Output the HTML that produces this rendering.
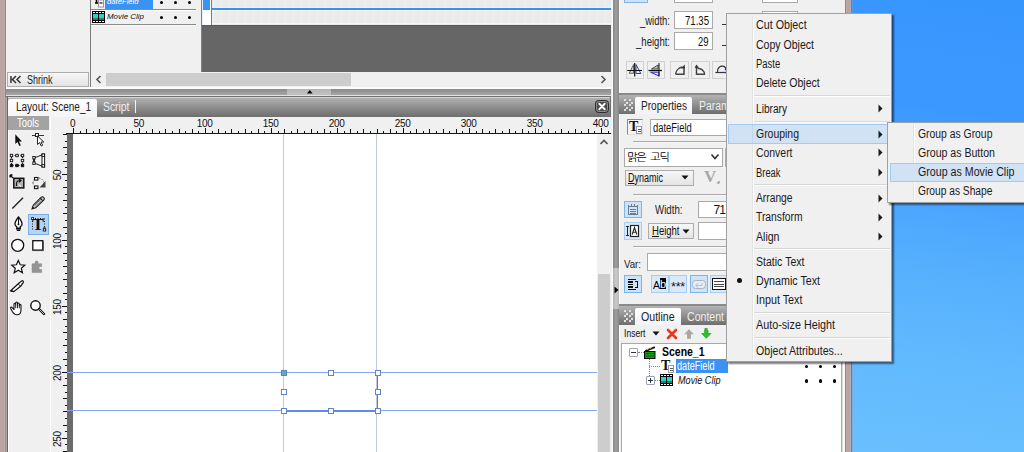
<!DOCTYPE html><html><head><meta charset="utf-8"><title>Layout</title><style>
html,body{margin:0;padding:0;}
body{width:1024px;height:452px;overflow:hidden;position:relative;background:#f0f0f0;
 font-family:"Liberation Sans","NanumGothic","Noto Sans CJK KR",sans-serif;font-size:12px;color:#1a1a1a;}
div{position:absolute;box-sizing:border-box;}
svg{position:absolute;overflow:visible;}
.t{white-space:nowrap;line-height:14px;height:14px;}
.inp{background:#fff;border:1px solid #a9a9a9;}
.btn{background:linear-gradient(#f6f6f6,#e4e4e4);border:1px solid #adadad;}
.ibtn{background:#f0f0f0;border:1px solid #d0d0d0;}
.hbtn{background:#cfe3f8;border:1px solid #7eb4ea;}
.hbtn2{background:#d9e9f9;border:1px solid #a8cdf0;}
.tabbar{background:linear-gradient(#b4b4b4,#8c8c8c 55%,#6e6e6e);}
.mi{left:757px;}
</style></head><body>
<div style="left:852px;top:0px;width:172px;height:452px;background:linear-gradient(188deg,#3795fe 0%,#3b99fe 25%,#4aa5fd 45%,#57b0fd 60%,#62bafe 80%,#6ac0fe 100%);"></div>
<div style="left:0px;top:0px;width:4px;height:452px;background:#baa5a4;"></div>
<div style="left:4px;top:0px;width:1px;height:452px;background:#bcacac;"></div>
<div style="left:5px;top:0px;width:1px;height:452px;background:#908484;"></div>
<div style="left:6px;top:0px;width:1px;height:452px;background:#f8f0f0;"></div>
<div style="left:845px;top:0px;width:1px;height:452px;background:#948686;"></div>
<div style="left:846px;top:0px;width:1px;height:452px;background:#bcaaaa;"></div>
<div style="left:847px;top:0px;width:3px;height:452px;background:#b8a4a2;"></div>
<div style="left:850px;top:0px;width:1px;height:452px;background:#b4aeb8;"></div>
<div style="left:851px;top:0px;width:1px;height:452px;background:#6c809c;"></div>
<div style="left:852px;top:0px;width:1px;height:452px;background:linear-gradient(#5a98e0,#7ab0e0);"></div>
<div style="left:90px;top:0px;width:1px;height:87px;background:#7a7a7a;"></div>
<div style="left:105px;top:0px;width:48px;height:9px;background:#3a92f3;overflow:hidden;"><div class="t" style="left:2px;top:-5.2px;color:#fff;font-size:8px;font-style:italic;transform:scaleX(0.960);transform-origin:0 0;">dateField</div></div>
<svg style="left:94px;top:0" width="12" height="9"><path d="M2.5 0v2.5M1 3h4" stroke="#000" stroke-width="1.6" fill="none"/><rect x="4.5" y="0" width="5" height="7" fill="#fff" stroke="#999" stroke-width="1"/><path d="M5.5 3h3" stroke="#333" stroke-width="1.4"/></svg>
<div style="left:91px;top:9px;width:105px;height:1px;background:#8a8a8a;"></div>
<div style="left:91px;top:10px;width:105px;height:1px;background:#fff;"></div>
<div style="left:91px;top:24px;width:105px;height:1px;background:#8a8a8a;"></div>
<div style="left:91px;top:25px;width:105px;height:1px;background:#fbfbfb;"></div>
<svg style="left:92px;top:11px" width="13" height="12" shape-rendering="crispEdges"><rect x="0" y="0" width="13" height="12" fill="#000"/><rect x="1" y="3" width="5" height="6" fill="#2fd0c8"/><rect x="7" y="3" width="5" height="6" fill="#2fd0c8"/><rect x="1" y="7" width="5" height="2" fill="#188a60"/><rect x="7" y="7" width="5" height="2" fill="#188a60"/><rect x="1" y="1" width="2" height="1" fill="#fff"/><rect x="4" y="1" width="2" height="1" fill="#fff"/><rect x="7" y="1" width="2" height="1" fill="#fff"/><rect x="10" y="1" width="2" height="1" fill="#fff"/><rect x="1" y="10" width="2" height="1" fill="#fff"/><rect x="4" y="10" width="2" height="1" fill="#fff"/><rect x="7" y="10" width="2" height="1" fill="#fff"/><rect x="10" y="10" width="2" height="1" fill="#fff"/></svg>
<div class="t" style="left:107px;top:10.1px;font-size:8px;transform:scaleX(0.9908);transform-origin:0 0;font-style:italic;color:#111;">Movie Clip</div>
<div style="left:159.8px;top:0.8px;width:3.4px;height:3.4px;border-radius:2px;background:#000;"></div>
<div style="left:159.8px;top:15.8px;width:3.4px;height:3.4px;border-radius:2px;background:#000;"></div>
<div style="left:173.8px;top:0.8px;width:3.4px;height:3.4px;border-radius:2px;background:#000;"></div>
<div style="left:173.8px;top:15.8px;width:3.4px;height:3.4px;border-radius:2px;background:#000;"></div>
<div style="left:187.8px;top:0.8px;width:3.4px;height:3.4px;border-radius:2px;background:#000;"></div>
<div style="left:187.8px;top:15.8px;width:3.4px;height:3.4px;border-radius:2px;background:#000;"></div>
<div style="left:201px;top:0px;width:1px;height:72px;background:#808080;"></div>
<div style="left:202px;top:0px;width:1px;height:25px;background:#e6f0fc;"></div>
<div style="left:203px;top:0px;width:7px;height:10px;background:#3a92f3;"></div>
<div style="left:203px;top:10px;width:8px;height:15px;background:#fff;"></div>
<div style="left:210px;top:0px;width:1px;height:25px;background:#fff;"></div>
<div style="left:211px;top:0px;width:1px;height:25px;background:#7c7c7c;"></div>
<div style="left:212px;top:0px;width:399px;height:25px;background:repeating-linear-gradient(90deg,#ebebeb 0,#ebebeb 1px,#f0f0f0 1px,#f0f0f0 2px,#ebebeb 2px,#ebebeb 8px);"></div>
<div style="left:212px;top:7px;width:399px;height:1px;background:#f5efe6;"></div>
<div style="left:212px;top:10px;width:399px;height:1px;background:#faf3e4;"></div>
<div style="left:212px;top:8px;width:399px;height:2px;background:#3290f6;"></div>
<div style="left:202px;top:25px;width:409px;height:47px;background:#666666;"></div>
<div style="left:202px;top:25px;width:409px;height:1px;background:#585858;"></div>
<div style="left:212px;top:23px;width:399px;height:1px;background:#f6f6f6;"></div>
<div style="left:202px;top:72px;width:409px;height:15px;background:#f0f0f0;"></div>
<div style="left:92px;top:72px;width:519px;height:15px;background:#f0f0f0;"></div>
<div style="left:106px;top:73px;width:245px;height:13px;background:#cdcdcd;"></div>
<svg style="left:95px;top:75px" width="8" height="9"><path d="M5.5 1L2 4.5L5.5 8" stroke="#555" stroke-width="1.6" fill="none"/></svg>
<svg style="left:599px;top:75px" width="8" height="9"><path d="M2.5 1L6 4.5L2.5 8" stroke="#555" stroke-width="1.6" fill="none"/></svg>
<div class="btn" style="left:7px;top:72px;width:82px;height:15px;"></div>
<svg style="left:10px;top:75px" width="12" height="9"><path d="M1 1v7M6 1L2.5 4.5L6 8M10.5 1L7 4.5L10.5 8" stroke="#333" stroke-width="1.5" fill="none"/></svg>
<div class="t" style="left:26.5px;top:73px;font-size:12px;transform:scaleX(0.7497);transform-origin:0 0;color:#222;">Shrink</div>
<div style="left:6px;top:87px;width:608px;height:2px;background:#fbfbfb;"></div>
<div style="left:6px;top:89px;width:605px;height:6px;background:linear-gradient(#8a8a8a,#a6a6a6);"></div>
<div style="left:287px;top:89px;width:44px;height:6px;background:linear-gradient(#b4b4b4,#c2c2c2);"></div>
<svg style="left:306.700px;top:90.300px" width="6" height="4"><path d="M2.800 0L5.600 3.400H0Z" fill="#000"/></svg>
<div style="left:6px;top:95px;width:605px;height:1px;background:#e2e2e2;"></div>
<div class="tabbar" style="left:6px;top:96px;width:605px;height:21px;border:1px solid #6f6f6f;border-bottom:none;"></div>
<div style="left:7px;top:97px;width:603px;height:1px;background:#d6d6d6;"></div>
<div style="left:8px;top:99px;width:89px;height:18px;background:linear-gradient(#ffffff,#f4f4f4);border-radius:2px 2px 0 0;"></div>
<div class="t" style="left:15.6px;top:100px;font-size:12px;transform:scaleX(0.8327);transform-origin:0 0;color:#222;">Layout: Scene_1</div>
<div class="t" style="left:103px;top:100px;font-size:12px;transform:scaleX(0.8639);transform-origin:0 0;color:#f0f0f0;">Script</div>
<div style="left:135px;top:100px;width:1px;height:13px;background:#f2f2f2;"></div>
<svg style="left:595px;top:100px" width="14" height="13"><rect x="0.5" y="0.5" width="13" height="12" rx="3" fill="#4a4a4a" stroke="#2c2c2c"/><rect x="1.5" y="1.5" width="11" height="10" rx="2.2" fill="none" stroke="#909090"/><path d="M4.3 3.8l5.4 5.4M9.700 3.800l-5.400 5.400" stroke="#fff" stroke-width="2" stroke-linecap="round"/></svg>
<div style="left:6px;top:117px;width:606px;height:335px;background:#f0f0f0;"></div>
<div style="left:5px;top:97px;width:1px;height:355px;background:#9c9090;"></div>
<div style="left:6px;top:97px;width:1px;height:355px;background:#aea6a6;"></div>
<div style="left:7px;top:97px;width:1px;height:355px;background:#6a6666;"></div>
<div style="left:8px;top:130px;width:1px;height:322px;background:#ffffff;"></div>
<div style="left:8px;top:116px;width:41px;height:14px;background:#a3a3a3;"></div>
<div class="t" style="left:17px;top:116px;font-size:12px;transform:scaleX(0.7854);transform-origin:0 0;color:#fff;">Tools</div>
<div style="left:50px;top:117px;width:1px;height:335px;background:#fdfdfd;"></div>
<div style="left:67px;top:134px;width:6px;height:318px;background:#6b6b6b;"></div>
<div style="left:73px;top:134px;width:524px;height:318px;background:#fff;"></div>
<div style="left:66px;top:133px;width:545px;height:1px;background:#1a1a1a;"></div>
<div style="left:597px;top:134px;width:14px;height:318px;background:#f0f0f0;"></div>
<div style="left:598px;top:274px;width:12px;height:178px;background:#cdcdcd;"></div>
<svg style="left:599px;top:138px" width="10" height="8"><path d="M1.5 6L5 2.5L8.5 6" stroke="#555" stroke-width="1.7" fill="none"/></svg>
<svg style="left:0;top:0" width="612" height="452" shape-rendering="crispEdges"><rect x="73" y="128" width="1" height="5" fill="#111"/><rect x="80" y="131" width="1" height="2" fill="#111"/><rect x="86" y="129" width="1" height="4" fill="#111"/><rect x="93" y="131" width="1" height="2" fill="#111"/><rect x="99" y="129" width="1" height="4" fill="#111"/><rect x="106" y="131" width="1" height="2" fill="#111"/><rect x="113" y="129" width="1" height="4" fill="#111"/><rect x="119" y="131" width="1" height="2" fill="#111"/><rect x="126" y="129" width="1" height="4" fill="#111"/><rect x="132" y="131" width="1" height="2" fill="#111"/><rect x="139" y="128" width="1" height="5" fill="#111"/><rect x="146" y="131" width="1" height="2" fill="#111"/><rect x="152" y="129" width="1" height="4" fill="#111"/><rect x="159" y="131" width="1" height="2" fill="#111"/><rect x="165" y="129" width="1" height="4" fill="#111"/><rect x="172" y="131" width="1" height="2" fill="#111"/><rect x="179" y="129" width="1" height="4" fill="#111"/><rect x="185" y="131" width="1" height="2" fill="#111"/><rect x="192" y="129" width="1" height="4" fill="#111"/><rect x="198" y="131" width="1" height="2" fill="#111"/><rect x="205" y="128" width="1" height="5" fill="#111"/><rect x="212" y="131" width="1" height="2" fill="#111"/><rect x="218" y="129" width="1" height="4" fill="#111"/><rect x="225" y="131" width="1" height="2" fill="#111"/><rect x="231" y="129" width="1" height="4" fill="#111"/><rect x="238" y="131" width="1" height="2" fill="#111"/><rect x="245" y="129" width="1" height="4" fill="#111"/><rect x="251" y="131" width="1" height="2" fill="#111"/><rect x="258" y="129" width="1" height="4" fill="#111"/><rect x="264" y="131" width="1" height="2" fill="#111"/><rect x="271" y="128" width="1" height="5" fill="#111"/><rect x="278" y="131" width="1" height="2" fill="#111"/><rect x="284" y="129" width="1" height="4" fill="#111"/><rect x="291" y="131" width="1" height="2" fill="#111"/><rect x="297" y="129" width="1" height="4" fill="#111"/><rect x="304" y="131" width="1" height="2" fill="#111"/><rect x="311" y="129" width="1" height="4" fill="#111"/><rect x="317" y="131" width="1" height="2" fill="#111"/><rect x="324" y="129" width="1" height="4" fill="#111"/><rect x="330" y="131" width="1" height="2" fill="#111"/><rect x="337" y="128" width="1" height="5" fill="#111"/><rect x="344" y="131" width="1" height="2" fill="#111"/><rect x="350" y="129" width="1" height="4" fill="#111"/><rect x="357" y="131" width="1" height="2" fill="#111"/><rect x="363" y="129" width="1" height="4" fill="#111"/><rect x="370" y="131" width="1" height="2" fill="#111"/><rect x="377" y="129" width="1" height="4" fill="#111"/><rect x="383" y="131" width="1" height="2" fill="#111"/><rect x="390" y="129" width="1" height="4" fill="#111"/><rect x="396" y="131" width="1" height="2" fill="#111"/><rect x="403" y="128" width="1" height="5" fill="#111"/><rect x="410" y="131" width="1" height="2" fill="#111"/><rect x="416" y="129" width="1" height="4" fill="#111"/><rect x="423" y="131" width="1" height="2" fill="#111"/><rect x="429" y="129" width="1" height="4" fill="#111"/><rect x="436" y="131" width="1" height="2" fill="#111"/><rect x="443" y="129" width="1" height="4" fill="#111"/><rect x="449" y="131" width="1" height="2" fill="#111"/><rect x="456" y="129" width="1" height="4" fill="#111"/><rect x="462" y="131" width="1" height="2" fill="#111"/><rect x="469" y="128" width="1" height="5" fill="#111"/><rect x="476" y="131" width="1" height="2" fill="#111"/><rect x="482" y="129" width="1" height="4" fill="#111"/><rect x="489" y="131" width="1" height="2" fill="#111"/><rect x="495" y="129" width="1" height="4" fill="#111"/><rect x="502" y="131" width="1" height="2" fill="#111"/><rect x="509" y="129" width="1" height="4" fill="#111"/><rect x="515" y="131" width="1" height="2" fill="#111"/><rect x="522" y="129" width="1" height="4" fill="#111"/><rect x="528" y="131" width="1" height="2" fill="#111"/><rect x="535" y="128" width="1" height="5" fill="#111"/><rect x="542" y="131" width="1" height="2" fill="#111"/><rect x="548" y="129" width="1" height="4" fill="#111"/><rect x="555" y="131" width="1" height="2" fill="#111"/><rect x="561" y="129" width="1" height="4" fill="#111"/><rect x="568" y="131" width="1" height="2" fill="#111"/><rect x="575" y="129" width="1" height="4" fill="#111"/><rect x="581" y="131" width="1" height="2" fill="#111"/><rect x="588" y="129" width="1" height="4" fill="#111"/><rect x="594" y="131" width="1" height="2" fill="#111"/><rect x="601" y="128" width="1" height="5" fill="#111"/><rect x="608" y="131" width="1" height="2" fill="#111"/><rect x="63" y="134" width="4" height="1" fill="#111"/><rect x="65" y="141" width="2" height="1" fill="#111"/><rect x="63" y="147" width="4" height="1" fill="#111"/><rect x="65" y="154" width="2" height="1" fill="#111"/><rect x="63" y="161" width="4" height="1" fill="#111"/><rect x="65" y="167" width="2" height="1" fill="#111"/><rect x="62" y="174" width="5" height="1" fill="#111"/><rect x="65" y="180" width="2" height="1" fill="#111"/><rect x="63" y="187" width="4" height="1" fill="#111"/><rect x="65" y="194" width="2" height="1" fill="#111"/><rect x="63" y="200" width="4" height="1" fill="#111"/><rect x="65" y="207" width="2" height="1" fill="#111"/><rect x="63" y="213" width="4" height="1" fill="#111"/><rect x="65" y="220" width="2" height="1" fill="#111"/><rect x="63" y="227" width="4" height="1" fill="#111"/><rect x="65" y="233" width="2" height="1" fill="#111"/><rect x="62" y="240" width="5" height="1" fill="#111"/><rect x="65" y="246" width="2" height="1" fill="#111"/><rect x="63" y="253" width="4" height="1" fill="#111"/><rect x="65" y="260" width="2" height="1" fill="#111"/><rect x="63" y="266" width="4" height="1" fill="#111"/><rect x="65" y="273" width="2" height="1" fill="#111"/><rect x="63" y="279" width="4" height="1" fill="#111"/><rect x="65" y="286" width="2" height="1" fill="#111"/><rect x="63" y="293" width="4" height="1" fill="#111"/><rect x="65" y="299" width="2" height="1" fill="#111"/><rect x="62" y="306" width="5" height="1" fill="#111"/><rect x="65" y="312" width="2" height="1" fill="#111"/><rect x="63" y="319" width="4" height="1" fill="#111"/><rect x="65" y="326" width="2" height="1" fill="#111"/><rect x="63" y="332" width="4" height="1" fill="#111"/><rect x="65" y="339" width="2" height="1" fill="#111"/><rect x="63" y="345" width="4" height="1" fill="#111"/><rect x="65" y="352" width="2" height="1" fill="#111"/><rect x="63" y="359" width="4" height="1" fill="#111"/><rect x="65" y="365" width="2" height="1" fill="#111"/><rect x="62" y="372" width="5" height="1" fill="#111"/><rect x="65" y="378" width="2" height="1" fill="#111"/><rect x="63" y="385" width="4" height="1" fill="#111"/><rect x="65" y="392" width="2" height="1" fill="#111"/><rect x="63" y="398" width="4" height="1" fill="#111"/><rect x="65" y="405" width="2" height="1" fill="#111"/><rect x="63" y="411" width="4" height="1" fill="#111"/><rect x="65" y="418" width="2" height="1" fill="#111"/><rect x="63" y="425" width="4" height="1" fill="#111"/><rect x="65" y="431" width="2" height="1" fill="#111"/><rect x="62" y="438" width="5" height="1" fill="#111"/><rect x="65" y="444" width="2" height="1" fill="#111"/><rect x="63" y="451" width="4" height="1" fill="#111"/></svg>
<div class="t" style="left:52.7px;top:116.5px;width:40px;text-align:center;font-size:10px;letter-spacing:-0.3px;color:#111;">0</div>
<div class="t" style="left:118.7px;top:116.5px;width:40px;text-align:center;font-size:10px;letter-spacing:-0.3px;color:#111;">50</div>
<div class="t" style="left:184.7px;top:116.5px;width:40px;text-align:center;font-size:10px;letter-spacing:-0.3px;color:#111;">100</div>
<div class="t" style="left:250.7px;top:116.5px;width:40px;text-align:center;font-size:10px;letter-spacing:-0.3px;color:#111;">150</div>
<div class="t" style="left:316.7px;top:116.5px;width:40px;text-align:center;font-size:10px;letter-spacing:-0.3px;color:#111;">200</div>
<div class="t" style="left:382.7px;top:116.5px;width:40px;text-align:center;font-size:10px;letter-spacing:-0.3px;color:#111;">250</div>
<div class="t" style="left:448.7px;top:116.5px;width:40px;text-align:center;font-size:10px;letter-spacing:-0.3px;color:#111;">300</div>
<div class="t" style="left:514.7px;top:116.5px;width:40px;text-align:center;font-size:10px;letter-spacing:-0.3px;color:#111;">350</div>
<div class="t" style="left:580.7px;top:116.5px;width:40px;text-align:center;font-size:10px;letter-spacing:-0.3px;color:#111;">400</div>
<div class="t" style="left:37.5px;top:167.5px;width:40px;text-align:center;font-size:10px;letter-spacing:-0.3px;color:#111;transform:rotate(-90deg);transform-origin:50% 50%;">50</div>
<div class="t" style="left:37.5px;top:233.5px;width:40px;text-align:center;font-size:10px;letter-spacing:-0.3px;color:#111;transform:rotate(-90deg);transform-origin:50% 50%;">100</div>
<div class="t" style="left:37.5px;top:299.5px;width:40px;text-align:center;font-size:10px;letter-spacing:-0.3px;color:#111;transform:rotate(-90deg);transform-origin:50% 50%;">150</div>
<div class="t" style="left:37.5px;top:365.5px;width:40px;text-align:center;font-size:10px;letter-spacing:-0.3px;color:#111;transform:rotate(-90deg);transform-origin:50% 50%;">200</div>
<div class="t" style="left:37.5px;top:431.5px;width:40px;text-align:center;font-size:10px;letter-spacing:-0.3px;color:#111;transform:rotate(-90deg);transform-origin:50% 50%;">250</div>
<div style="left:283px;top:134px;width:1px;height:318px;background:#c0c8e2;"></div>
<div style="left:376px;top:134px;width:1px;height:318px;background:#c0c8e2;"></div>
<div style="left:67px;top:372px;width:530px;height:1px;background:#86a4f6;"></div>
<div style="left:67px;top:410px;width:530px;height:1px;background:#86a4f6;"></div>
<div style="left:286px;top:410px;width:90px;height:2px;background:#5c8cf0;"></div>
<div style="left:377px;top:375px;width:1px;height:36px;background:#5c78cc;"></div>
<div style="left:281px;top:370px;width:6px;height:6px;background:#5ab0b0;border:1px solid #6282cc;"></div>
<div style="left:281px;top:389px;width:6px;height:6px;background:#fff;border:1px solid #6282cc;"></div>
<div style="left:281px;top:408px;width:6px;height:6px;background:#fff;border:1px solid #6282cc;"></div>
<div style="left:328px;top:370px;width:6px;height:6px;background:#fff;border:1px solid #6282cc;"></div>
<div style="left:328px;top:408px;width:6px;height:6px;background:#fff;border:1px solid #6282cc;"></div>
<div style="left:375px;top:370px;width:6px;height:6px;background:#fff;border:1px solid #6282cc;"></div>
<div style="left:375px;top:389px;width:6px;height:6px;background:#fff;border:1px solid #6282cc;"></div>
<div style="left:375px;top:408px;width:6px;height:6px;background:#fff;border:1px solid #6282cc;"></div>
<svg style="left:14px;top:133px" width="10" height="14" ><path d="M1.300 1.200v9.800l2.200-2l1.800 3.900l1.500-.700l-1.800-3.800h3Z" fill="#111"/></svg>
<svg style="left:31px;top:132px" width="14" height="15" ><path d="M1 3.5h12" stroke="#333" stroke-width="1"/><rect x="4.5" y="1.5" width="3" height="3" fill="#fff" stroke="#222" stroke-width="1"/><path d="M6.5 4v8.5l2.1-1.9l1.6 3.4l1.4-.7l-1.6-3.3h2.8Z" fill="#fff" stroke="#222" stroke-width="1"/></svg>
<svg style="left:9px;top:153px" width="16" height="16" ><rect x="2.5" y="2.5" width="11" height="10" fill="none" stroke="#111" stroke-width="1" stroke-dasharray="1.5 1.5"/><rect x="1.3" y="1.3" width="2.4" height="2.4" fill="#fff" stroke="#111" stroke-width="0.9"/><rect x="1.3" y="6.3" width="2.4" height="2.4" fill="#fff" stroke="#111" stroke-width="0.9"/><rect x="1.3" y="11.3" width="2.4" height="2.4" fill="#111" stroke="#111" stroke-width="0.9"/><rect x="6.8" y="1.3" width="2.4" height="2.4" fill="#fff" stroke="#111" stroke-width="0.9"/><rect x="6.8" y="11.3" width="2.4" height="2.4" fill="#111" stroke="#111" stroke-width="0.9"/><rect x="12.3" y="1.3" width="2.4" height="2.4" fill="#fff" stroke="#111" stroke-width="0.9"/><rect x="12.3" y="6.3" width="2.4" height="2.4" fill="#fff" stroke="#111" stroke-width="0.9"/><rect x="12.3" y="11.3" width="2.4" height="2.4" fill="#111" stroke="#111" stroke-width="0.9"/></svg>
<svg style="left:31px;top:152px" width="16" height="16" ><path d="M3 6L12 2.5M3 11L12 14.5" stroke="#222" stroke-width="1"/><rect x="11" y="2" width="2.6" height="13" fill="#fff" stroke="#111" stroke-width="1"/><path d="M3 5.5v6" stroke="#111" stroke-width="1.8"/><rect x="1.8" y="4.5" width="2.4" height="2.4" fill="#fff" stroke="#111" stroke-width="0.9"/><rect x="1.8" y="10" width="2.4" height="2.4" fill="#fff" stroke="#111" stroke-width="0.9"/><rect x="11" y="2" width="2.6" height="2.4" fill="#fff" stroke="#111" stroke-width="0.9"/><rect x="11" y="12.6" width="2.6" height="2.4" fill="#fff" stroke="#111" stroke-width="0.9"/></svg>
<svg style="left:9px;top:174px" width="17" height="16" ><path d="M1 1l3 3M1 1h2.5M1 1v2.5" stroke="#111" stroke-width="1.3" fill="none"/><rect x="4.8" y="4.3" width="10" height="9.6" fill="#b4b4b4" stroke="#111" stroke-width="1.5"/><path d="M7.5 12V9.5c0-2 1.5-3 4-3M10 5l2 1.5l-2 1.8" fill="none" stroke="#111" stroke-width="1.2"/><path d="M9.5 10.5l2.5 2" stroke="#fff" stroke-width="1"/></svg>
<svg style="left:30px;top:176px" width="17" height="14" ><path d="M3 7C3 3 6 1.5 9 2C11.5 2.5 13 4 14 6.5" fill="none" stroke="#555" stroke-width="1" stroke-dasharray="1.4 1.6"/><path d="M3 7C3 9.5 4 11 5.5 11.5" fill="none" stroke="#777" stroke-width="1" stroke-dasharray="1.2 1.8"/><path d="M15.5 5v6.5H9.5Z" fill="#444"/><rect x="4.5" y="1.5" width="3.4" height="2.6" fill="#fff" stroke="#111" stroke-width="1.1"/><rect x="4.5" y="10" width="3.4" height="2.6" fill="#fff" stroke="#111" stroke-width="1.1"/></svg>
<svg style="left:11px;top:196px" width="14" height="14" ><path d="M1.3 12.5L12 1.7" stroke="#222" stroke-width="1.4"/></svg>
<svg style="left:30px;top:195px" width="16" height="16" ><path d="M2 14l1.2-3.8L11 2.4c.8-.8 2-.8 2.7 0c.8.8.8 1.9 0 2.7L5.8 12.8Z" fill="#c8c8c8" stroke="#222" stroke-width="1.1"/><path d="M4.4 10.6L12 3M5.4 12L13 4.4" stroke="#555" stroke-width="0.8"/><path d="M2 14l.8-2.4l1.6 1.6Z" fill="#111"/><path d="M10.2 3.2l2.6 2.6" stroke="#222" stroke-width="1"/></svg>
<svg style="left:13px;top:216px" width="11" height="16" ><path d="M5.5 1C3.5 3.5 2 6 2 8c0 1.3.8 2.2 1.8 2.8v2h3.4v-2C8.2 10.200 9 9.300 9 8C9 6 7.500 3.500 5.500 1Z" fill="#fff" stroke="#111" stroke-width="1.3"/><path d="M5.5 2.5v5.500" stroke="#111" stroke-width="1"/><circle cx="5.5" cy="8.300" r="1" fill="#111"/><path d="M3.300 12.200h4.400M3.800 14.200h3.400" stroke="#111" stroke-width="1.400"/></svg>
<div style="left:28px;top:214px;width:21px;height:21px;background:#b4d3f5;border:1px solid #78aeeb;"></div>
<svg style="left:28px;top:214px" width="21" height="21" ><path d="M4.500 4.500h12M4.500 4.500v12M16.500 4.500v10" fill="none" stroke="#222" stroke-width="1" stroke-dasharray="1 1.500"/><rect x="3.600" y="3.600" width="2" height="2" fill="#fff" stroke="#111" stroke-width="0.800"/><rect x="15.300" y="14.800" width="2.400" height="2.200" fill="#fff" stroke="#111" stroke-width="0.900"/><path d="M15.800 14.800v-1c0-.900 1.400-.900 1.400 0v1" fill="none" stroke="#111" stroke-width="0.800"/></svg>
<div class="t" style="left:31.5px;top:216px;font-family:'Liberation Serif',serif;font-weight:bold;font-size:17px;line-height:17px;height:17px;color:#111;transform:scaleX(1.05);transform-origin:0 0;">T</div>
<svg style="left:10px;top:238px" width="16" height="15" ><circle cx="7.700" cy="7.300" r="6" fill="#fff" stroke="#111" stroke-width="1.300"/></svg>
<svg style="left:31px;top:239px" width="14" height="13" ><rect x="1.800" y="1.700" width="10" height="9.400" fill="#fff" stroke="#111" stroke-width="1.300"/><path d="M2.500 11.600h9.800v-9" fill="none" stroke="#444" stroke-width="1"/></svg>
<svg style="left:10px;top:259px" width="17" height="15" ><path d="M8.300 1.500l1.900 4.300l4.600.400l-3.500 3l1.100 4.500l-4.100-2.500l-4.100 2.500l1.100-4.500l-3.500-3l4.600-.400Z" fill="#fff" stroke="#111" stroke-width="1.200" stroke-linejoin="miter"/></svg>
<svg style="left:31px;top:260px" width="13" height="13" ><path d="M1 3.800h3v-1.300a1.600 1.600 0 1 1 3.200 0v1.300h3.500v2.800h-1.400a1.400 1.400 0 1 0 0 2.800h1.400v3.200H1Z" fill="#949494" stroke="#888" stroke-width="0.500"/></svg>
<svg style="left:9px;top:279px" width="17" height="14" ><path d="M1.700 11.800L9.500 4.500l3.200-2.600c.900-.600 2.300.600 1.500 1.700L11.800 7L4.800 12.600Z" fill="#fff" stroke="#111" stroke-width="1.200"/><path d="M9.200 5l2.400 2.200" stroke="#111" stroke-width="1"/><path d="M1.700 11.800l3.100.800" stroke="#111" stroke-width="1.400"/><path d="M11.500 3.500l1.200 1.200" stroke="#666" stroke-width="0.800"/></svg>
<svg style="left:9px;top:300px" width="17" height="16" ><path d="M5 9.500V4.200c0-1.300 1.700-1.300 1.700 0V3c0-1.300 1.800-1.300 1.800 0v1c0-1.300 1.800-1.300 1.800 0v1.400c0-1.200 1.700-1.200 1.700 0V10c0 3-1.500 4.800-4 4.800c-2.200 0-3.300-1-4.500-3L1.700 8.600c-.600-1.200.800-1.900 1.500-1Z" fill="#fff" stroke="#111" stroke-width="1.100" stroke-linejoin="round"/><path d="M6.700 4.200v4M8.500 4v4.200M10.300 5v3.400" stroke="#111" stroke-width="0.900"/></svg>
<svg style="left:29px;top:299px" width="17" height="17" ><circle cx="6.500" cy="6.500" r="4.700" fill="#fff" stroke="#111" stroke-width="1.400"/><path d="M10 10l5 5" stroke="#111" stroke-width="2.400" stroke-linecap="round"/><path d="M10.500 10.500l4.200 4.200" stroke="#ddd" stroke-width="0.800" stroke-linecap="round"/></svg>
<div style="left:611px;top:0px;width:3px;height:452px;background:#f0f0f0;"></div>
<div style="left:612px;top:0px;width:1px;height:452px;background:#fcfcfc;"></div>
<div style="left:613px;top:0px;width:6px;height:452px;background:linear-gradient(90deg,#868686,#9c9c9c 40%,#9a9a9a 60%,#888888);"></div>
<div style="left:613px;top:268px;width:6px;height:41px;background:linear-gradient(90deg,#b4b4b4,#cacaca 50%,#b8b8b8);"></div>
<svg style="left:614px;top:286px" width="5" height="8"><path d="M0.5 0.5L4.5 4L0.5 7.5Z" fill="#000"/></svg>
<div style="left:619px;top:0px;width:226px;height:93px;background:#f0f0f0;border-left:1px solid #fbfbfb;"></div>
<div class="hbtn" style="left:624px;top:-10px;width:24px;height:13px;"></div>
<div class="inp" style="left:674px;top:-10px;width:39px;height:13px;"></div>
<div class="inp" style="left:762px;top:-10px;width:36px;height:13px;"></div>
<div class="t" style="left:640px;top:14px;font-size:12px;transform:scaleX(0.7891);transform-origin:0 0;color:#222;">_width:</div>
<div class="t" style="left:636px;top:35px;font-size:12px;transform:scaleX(0.7963);transform-origin:0 0;color:#222;">_height:</div>
<div class="inp" style="left:674px;top:11px;width:39px;height:18px;"></div>
<div class="inp" style="left:674px;top:32px;width:39px;height:18px;"></div>
<div class="t" style="left:684.6px;top:14px;font-size:12px;transform:scaleX(0.7993);transform-origin:0 0;color:#111;">71.35</div>
<div class="t" style="left:698.4px;top:35px;font-size:12px;transform:scaleX(0.7867);transform-origin:0 0;color:#111;">29</div>
<div class="inp" style="left:762px;top:11px;width:36px;height:18px;"></div>
<div class="inp" style="left:762px;top:32px;width:36px;height:18px;"></div>
<div style="left:722px;top:24px;width:4px;height:1px;background:#333;"></div>
<div style="left:722px;top:45px;width:4px;height:1px;background:#333;"></div>
<div class="ibtn" style="left:626px;top:61px;width:18px;height:18px;"></div>
<div class="ibtn" style="left:647px;top:61px;width:18px;height:18px;"></div>
<div class="ibtn" style="left:670px;top:61px;width:19px;height:18px;"></div>
<div class="ibtn" style="left:691px;top:61px;width:19px;height:18px;"></div>
<div class="ibtn" style="left:712px;top:61px;width:19px;height:18px;"></div>
<svg style="left:626px;top:61px" width="18" height="18"><path d="M7.600 3.500L3.200 12.300H7.600Z" fill="#d8d8d8" stroke="#555" stroke-width="0.900"/><path d="M10 3.500L14.800 12.500H10Z" fill="#e8e8f8" stroke="#3c3ca8" stroke-width="1"/><path d="M8.700 2v13.500" stroke="#111" stroke-width="1.200"/><path d="M1.300 9.500h14.700" stroke="#111" stroke-width="1"/></svg>
<svg style="left:647px;top:61px" width="18" height="18"><path d="M11 4L4.500 8H11Z" fill="#ccc" stroke="#333" stroke-width="0.900"/><path d="M3.500 11.200H12V15Z" fill="#e0e0f8" stroke="#3030b8" stroke-width="1"/><path d="M1.500 9.500h13.500" stroke="#111" stroke-width="1.200"/><path d="M12 2v13.500" stroke="#111" stroke-width="1"/></svg>
<svg style="left:670px;top:61px" width="19" height="18"><path d="M5.500 13.200H14V6" fill="none" stroke="#444" stroke-width="1.500"/><path d="M5.500 13C6 9.500 9 6.500 12.500 6" fill="none" stroke="#444" stroke-width="1.400"/><path d="M14.800 3.500v4h-4Z" fill="#333"/></svg>
<svg style="left:691px;top:61px" width="19" height="18"><path d="M5.500 5.500V13.200H14" fill="none" stroke="#444" stroke-width="1.500"/><path d="M6.500 7.300C10 7.500 13 10 13.800 13" fill="none" stroke="#444" stroke-width="1.400"/><path d="M3.500 6.800l2-3.300l2.500 3.300Z" fill="#333"/></svg>
<svg style="left:712px;top:61px" width="19" height="18"><path d="M3.400 11.500H14" fill="none" stroke="#333" stroke-width="1.200"/><path d="M5.500 11C5 7 8 4.800 11 5.200C13 5.600 14 7 14.200 9" fill="none" stroke="#333" stroke-width="1.200"/><path d="M11.500 11.500h3" stroke="#3030b0" stroke-width="1.200"/><path d="M12.500 8.500l2 1.500l1-2.500Z" fill="#333"/></svg>
<div style="left:619px;top:93px;width:226px;height:2px;background:#8a8a8a;"></div>
<div class="tabbar" style="left:619px;top:95px;width:226px;height:19px;"></div>
<svg style="left:623px;top:98px" width="10" height="14" shape-rendering="crispEdges"><rect x="1" y="1" width="1.6" height="1.6" fill="#e0e0e0"/><rect x="6" y="1" width="1.6" height="1.6" fill="#e0e0e0"/><rect x="3" y="4" width="1.6" height="1.6" fill="#e0e0e0"/><rect x="8" y="4" width="1.6" height="1.6" fill="#e0e0e0"/><rect x="1" y="6" width="1.6" height="1.6" fill="#e0e0e0"/><rect x="6" y="6" width="1.6" height="1.6" fill="#e0e0e0"/><rect x="3" y="9" width="1.6" height="1.6" fill="#e0e0e0"/><rect x="8" y="9" width="1.6" height="1.6" fill="#e0e0e0"/><rect x="1" y="11" width="1.6" height="1.6" fill="#e0e0e0"/><rect x="6" y="11" width="1.6" height="1.6" fill="#e0e0e0"/></svg>
<div style="left:635px;top:97px;width:57px;height:17px;background:linear-gradient(#fff,#f3f3f3);border-radius:2px 2px 0 0;"></div>
<div class="t" style="left:641px;top:99px;font-size:12px;transform:scaleX(0.8411);transform-origin:0 0;color:#222;">Properties</div>
<div class="t" style="left:699px;top:99px;font-size:12px;transform:scaleX(0.8687);transform-origin:0 0;color:#f0f0f0;">Param</div>
<div style="left:619px;top:114px;width:226px;height:190px;background:#f0f0f0;border-left:1px solid #fbfbfb;"></div>
<div style="left:627px;top:119px;width:16px;height:16px;background:#f4f4f4;border:1px solid #8a8a8a;border-right-color:#e0e0e0;border-bottom-color:#e0e0e0;"></div>
<div class="t" style="left:629px;top:120px;font-family:'Liberation Serif',serif;font-weight:bold;font-size:14px;line-height:14px;color:#111;">T</div><svg style="left:636px;top:126px" width="6" height="8" shape-rendering="crispEdges"><rect x="0.5" y="0.5" width="5" height="7" fill="#fff" stroke="#999"/><path d="M1.5 3.5h3M1.5 5.5h3" stroke="#555" stroke-width="1"/></svg>
<div class="inp" style="left:650px;top:119px;width:120px;height:17px;"></div>
<div class="t" style="left:653.4px;top:121px;font-size:12px;transform:scaleX(0.784);transform-origin:0 0;color:#111;">dateField</div>
<div style="left:633px;top:141px;width:200px;height:1px;background:#a8a8a8;"></div>
<div style="left:633px;top:142px;width:200px;height:1px;background:#fafafa;"></div>
<div class="inp" style="left:624px;top:148px;width:99px;height:19px;"></div>
<div class="t" style="left:627px;top:150px;font-size:11px;color:#000;letter-spacing:-1px;word-spacing:2.5px;">맑은 고딕</div>
<svg style="left:710px;top:153px" width="10" height="8"><path d="M1.5 1.5L5 5.5L8.5 1.5" stroke="#333" stroke-width="1.6" fill="none"/></svg>
<div style="left:725px;top:148px;width:1px;height:19px;background:#b0b0b0;"></div>
<div class="btn" style="left:625px;top:170px;width:69px;height:16px;"></div>
<div class="t" style="left:627.7px;top:171px;font-size:12px;transform:scaleX(0.7499);transform-origin:0 0;color:#111;"><u>D</u>ynamic</div>
<svg style="left:681px;top:175px" width="8" height="5"><path d="M0.5 0.5h7L4 4.5Z" fill="#111"/></svg>
<div class="t" style="left:704px;top:168px;font-family:'Liberation Serif',serif;font-weight:bold;font-size:17px;color:#a8a8a8;line-height:18px;height:18px;">V</div>
<svg style="left:716px;top:180px" width="4" height="4"><path d="M3.5 0.5v3h-3Z" fill="#888"/></svg>
<div style="left:633px;top:194px;width:200px;height:1px;background:#a8a8a8;"></div>
<div style="left:633px;top:195px;width:200px;height:1px;background:#fafafa;"></div>
<div class="hbtn" style="left:624px;top:201px;width:18px;height:17px;"></div>
<svg style="left:624px;top:201px" width="18" height="17" shape-rendering="crispEdges"><path d="M4.5 3.5v10h9v-10M4.5 5.5h9M6 8.5h6M6 10.5h6M6 12.5h6M7.5 3v2M10.5 3v2" fill="none" stroke="#6c7c8c" stroke-width="1"/></svg>
<div class="t" style="left:655px;top:203px;font-size:12px;transform:scaleX(0.8087);transform-origin:0 0;color:#222;">Width:</div>
<div class="inp" style="left:698px;top:201px;width:60px;height:17px;"></div>
<div class="t" style="left:713.4px;top:203px;font-size:12px;letter-spacing:-0.8px;color:#111;">71.</div>
<div class="hbtn2" style="left:624px;top:222px;width:18px;height:18px;"></div>
<svg style="left:624px;top:222px" width="18" height="18"><path d="M3.5 4v10M2 4.5h3M2 13.5h3" stroke="#222" stroke-width="1" fill="none"/><rect x="6.5" y="3.5" width="8" height="11" fill="#fff" stroke="#222" stroke-width="1.2"/><path d="M8.2 12.5L10.5 5.5L12.8 12.5M9 10.2h3" stroke="#222" stroke-width="1.1" fill="none"/></svg>
<div class="btn" style="left:648px;top:223px;width:46px;height:16px;"></div>
<div class="t" style="left:651.5px;top:224px;font-size:12px;transform:scaleX(0.7928);transform-origin:0 0;color:#111;"><u>H</u>eight</div>
<svg style="left:682px;top:229px" width="8" height="5"><path d="M0.5 0.5h7L4 4.5Z" fill="#111"/></svg>
<div class="inp" style="left:698px;top:222px;width:60px;height:18px;"></div>
<div style="left:633px;top:246px;width:200px;height:1px;background:#a8a8a8;"></div>
<div style="left:633px;top:247px;width:200px;height:1px;background:#fafafa;"></div>
<div class="t" style="left:624px;top:256.5px;font-size:11px;transform:scaleX(0.8783);transform-origin:0 0;color:#222;">Var:</div>
<div class="inp" style="left:647px;top:253px;width:120px;height:18px;"></div>
<div class="hbtn" style="left:624px;top:275px;width:18px;height:18px;"></div>
<svg style="left:624px;top:275px" width="18" height="18" shape-rendering="crispEdges"><path d="M4 4.5h8M4 7h5M4 9.5h5M4 12h5M4 14.5h8" stroke="#111" stroke-width="1.4" fill="none"/><path d="M10.5 6.5h3v6h-3" stroke="#111" stroke-width="1.4" fill="none"/></svg>
<div class="hbtn2" style="left:651px;top:275px;width:18px;height:18px;"></div>
<div class="t" style="left:653px;top:278px;font-size:10.5px;color:#000;">A</div>
<div style="left:660px;top:278px;width:6px;height:11px;background:#000;"></div>
<div class="t" style="left:660px;top:277px;font-size:11px;color:#fff;">b</div>
<div class="hbtn2" style="left:669px;top:275px;width:18px;height:18px;"></div>
<div class="t" style="left:671px;top:280px;font-size:12.5px;letter-spacing:-0.2px;color:#111;">***</div>
<div class="hbtn" style="left:690px;top:275px;width:18px;height:18px;"></div>
<svg style="left:690px;top:275px" width="18" height="18"><rect x="2.5" y="5.5" width="13" height="8" rx="3" fill="#e4ecf4" stroke="#a8b4c0"/><path d="M12 8v2.5H6M8 8.5L5.5 10.5L8 12.5" fill="none" stroke="#b8c4d0" stroke-width="1"/></svg>
<div class="hbtn2" style="left:710px;top:275px;width:18px;height:18px;"></div>
<svg style="left:710px;top:275px" width="18" height="18" shape-rendering="crispEdges"><rect x="2.5" y="3.5" width="13" height="11" fill="#fff" stroke="#111" stroke-width="1.4"/><path d="M4 6.5h10M4 9h10M4 11.5h10" stroke="#444" stroke-width="1"/></svg>
<div style="left:619px;top:304px;width:226px;height:2px;background:#8a8a8a;"></div>
<div class="tabbar" style="left:619px;top:306px;width:226px;height:19px;"></div>
<svg style="left:623px;top:309px" width="10" height="14" shape-rendering="crispEdges"><rect x="1" y="1" width="1.6" height="1.6" fill="#e0e0e0"/><rect x="6" y="1" width="1.6" height="1.6" fill="#e0e0e0"/><rect x="3" y="4" width="1.6" height="1.6" fill="#e0e0e0"/><rect x="8" y="4" width="1.6" height="1.6" fill="#e0e0e0"/><rect x="1" y="6" width="1.6" height="1.6" fill="#e0e0e0"/><rect x="6" y="6" width="1.6" height="1.6" fill="#e0e0e0"/><rect x="3" y="9" width="1.6" height="1.6" fill="#e0e0e0"/><rect x="8" y="9" width="1.6" height="1.6" fill="#e0e0e0"/><rect x="1" y="11" width="1.6" height="1.6" fill="#e0e0e0"/><rect x="6" y="11" width="1.6" height="1.6" fill="#e0e0e0"/></svg>
<div style="left:635px;top:308px;width:46px;height:17px;background:linear-gradient(#fff,#f3f3f3);border-radius:2px 2px 0 0;"></div>
<div class="t" style="left:641px;top:310px;font-size:12px;transform:scaleX(0.8838);transform-origin:0 0;color:#222;">Outline</div>
<div class="t" style="left:686.5px;top:310px;font-size:12px;transform:scaleX(0.8804);transform-origin:0 0;color:#f0f0f0;">Content</div>
<div style="left:619px;top:325px;width:226px;height:127px;background:#f0f0f0;border-left:1px solid #fbfbfb;"></div>
<div class="t" style="left:624.3px;top:326px;font-size:11px;transform:scaleX(0.7779);transform-origin:0 0;color:#111;">Insert</div>
<svg style="left:652px;top:331px" width="8" height="5"><path d="M0.5 0.5h7L4 4.5Z" fill="#111"/></svg>
<svg style="left:666px;top:328px" width="12" height="12"><path d="M2 2L10 10M10 2L2 10" stroke="#e8381c" stroke-width="2.6" stroke-linecap="round"/></svg>
<svg style="left:684px;top:329px" width="10" height="10"><path d="M5 0.300L9.800 5.200H6.900V9.800H3.100V5.200H0.200Z" fill="#a6a6a6"/></svg>
<svg style="left:701px;top:328px" width="11" height="11"><path d="M5.300 10.300L10 5.500H7V2.200H3.600V5.500H0.600Z" fill="#28c428" stroke="#189018" stroke-width="0.600"/><path d="M4.200 2.200V0.900h2.600" stroke="#189018" stroke-width="1.200" fill="none"/></svg>
<div style="left:621px;top:343px;width:221px;height:109px;background:#fff;border:1px solid #a8a8a8;border-bottom:none;"></div>
<div style="left:638px;top:352px;width:6px;height:1px;border-top:1px dotted #888;"></div>
<div style="left:649px;top:358px;width:1px;height:22px;border-left:1px dotted #888;"></div>
<div style="left:649px;top:366px;width:11px;height:1px;border-top:1px dotted #888;"></div>
<div style="left:655px;top:380px;width:5px;height:1px;border-top:1px dotted #888;"></div>
<div style="left:629px;top:348px;width:9px;height:9px;background:#fff;border:1px solid #9aa4b4;border-radius:1px;"></div>
<div style="left:631px;top:352px;width:5px;height:1px;background:#334;"></div>
<svg style="left:644px;top:345px" width="12" height="14"><path d="M0.8 5.2L10.5 1.2L11.3 3L1.6 7Z" fill="#1a1a1a"/><path d="M3 4.5l1.5-.6M6 3.3l1.5-.6" stroke="#e8d040" stroke-width="1"/><rect x="0.5" y="6.5" width="10.5" height="7" fill="#18a018" stroke="#0a0a0a"/><path d="M1.5 8.5h8.5M1.5 11h8.5" stroke="#0c4c0c" stroke-width="1"/></svg>
<div class="t" style="left:661.5px;top:345px;font-size:12px;transform:scaleX(0.8727);transform-origin:0 0;font-weight:bold;color:#000;">Scene_1</div>
<div class="t" style="left:661px;top:359px;font-family:'Liberation Serif',serif;font-weight:bold;font-size:14px;line-height:14px;color:#111;">T</div><svg style="left:668px;top:365px" width="6" height="8" shape-rendering="crispEdges"><rect x="0.5" y="0.5" width="5" height="7" fill="#fff" stroke="#999"/><path d="M1.5 3.5h3M1.5 5.5h3" stroke="#555" stroke-width="1"/></svg>
<div style="left:676px;top:359px;width:52px;height:14px;background:#3a92f3;"></div>
<div class="t" style="left:677px;top:359px;font-size:12px;transform:scaleX(0.7597);transform-origin:0 0;color:#fff;">dateField</div>
<div style="left:646px;top:376px;width:9px;height:9px;background:#fff;border:1px solid #9aa4b4;border-radius:1px;"></div>
<div style="left:648px;top:380px;width:5px;height:1px;background:#334;"></div>
<div style="left:650px;top:378px;width:1px;height:5px;background:#334;"></div>
<svg style="left:660px;top:374px" width="13" height="12" shape-rendering="crispEdges"><rect x="0" y="0" width="13" height="12" fill="#000"/><rect x="1" y="3" width="5" height="6" fill="#2fd0c8"/><rect x="7" y="3" width="5" height="6" fill="#2fd0c8"/><rect x="1" y="7" width="5" height="2" fill="#188a60"/><rect x="7" y="7" width="5" height="2" fill="#188a60"/><rect x="1" y="1" width="2" height="1" fill="#fff"/><rect x="4" y="1" width="2" height="1" fill="#fff"/><rect x="7" y="1" width="2" height="1" fill="#fff"/><rect x="10" y="1" width="2" height="1" fill="#fff"/><rect x="1" y="10" width="2" height="1" fill="#fff"/><rect x="4" y="10" width="2" height="1" fill="#fff"/><rect x="7" y="10" width="2" height="1" fill="#fff"/><rect x="10" y="10" width="2" height="1" fill="#fff"/></svg>
<div class="t" style="left:678.4px;top:373px;font-size:11.5px;transform:scaleX(0.7917);transform-origin:0 0;font-style:italic;color:#111;">Movie Clip</div>
<div style="left:804.8px;top:364.8px;width:3.4px;height:3.4px;border-radius:2px;background:#000;"></div>
<div style="left:804.8px;top:379.3px;width:3.4px;height:3.4px;border-radius:2px;background:#000;"></div>
<div style="left:818.8px;top:364.8px;width:3.4px;height:3.4px;border-radius:2px;background:#000;"></div>
<div style="left:818.8px;top:379.3px;width:3.4px;height:3.4px;border-radius:2px;background:#000;"></div>
<div style="left:832.8px;top:364.8px;width:3.4px;height:3.4px;border-radius:2px;background:#000;"></div>
<div style="left:832.8px;top:379.3px;width:3.4px;height:3.4px;border-radius:2px;background:#000;"></div>
<div style="left:842px;top:0px;width:3px;height:343px;background:#f0f0f0;"></div>
<div style="left:842px;top:343px;width:1px;height:109px;background:#dcdcdc;"></div>
<div style="left:843px;top:343px;width:2px;height:109px;background:#fbf8f8;"></div>
<div style="left:726px;top:13px;width:166px;height:349px;background:#f0f0f0;border:1px solid #a0a0a0;box-shadow:2px 2px 1.5px rgba(0,0,10,0.5);"></div>
<div style="left:752px;top:15px;width:1px;height:345px;background:#e2e3e3;"></div>
<div style="left:753px;top:15px;width:1px;height:345px;background:#fdfdfd;"></div>
<div style="left:728px;top:124px;width:162px;height:20px;background:#d1e2f5;border:1px solid #a5cbf1;"></div>
<div style="left:752px;top:125px;width:1px;height:18px;background:#c4d6ea;"></div>
<div class="t" style="left:756px;top:18.3px;font-size:12px;transform:scaleX(0.8926);transform-origin:0 0;color:#1a1a1a;">Cut Object</div>
<div class="t" style="left:756px;top:37.5px;font-size:12px;transform:scaleX(0.8784);transform-origin:0 0;color:#1a1a1a;">Copy Object</div>
<div class="t" style="left:756px;top:57px;font-size:12px;transform:scaleX(0.7887);transform-origin:0 0;color:#1a1a1a;">Paste</div>
<div class="t" style="left:756px;top:76.2px;font-size:12px;transform:scaleX(0.8762);transform-origin:0 0;color:#1a1a1a;">Delete Object</div>
<div class="t" style="left:756px;top:101.5px;font-size:12px;transform:scaleX(0.8452);transform-origin:0 0;color:#1a1a1a;">Library</div>
<svg style="left:878px;top:104px" width="5" height="9"><path d="M0.5 0.5L4.5 4.5L0.5 8.5Z" fill="#1a1a1a"/></svg>
<div class="t" style="left:756px;top:126.9px;font-size:12px;transform:scaleX(0.8711);transform-origin:0 0;color:#1a1a1a;">Grouping</div>
<svg style="left:878px;top:130px" width="5" height="9"><path d="M0.5 0.5L4.5 4.5L0.5 8.5Z" fill="#1a1a1a"/></svg>
<div class="t" style="left:756px;top:145.8px;font-size:12px;transform:scaleX(0.8687);transform-origin:0 0;color:#1a1a1a;">Convert</div>
<svg style="left:878px;top:148px" width="5" height="9"><path d="M0.5 0.5L4.5 4.5L0.5 8.5Z" fill="#1a1a1a"/></svg>
<div class="t" style="left:756px;top:165.6px;font-size:12px;transform:scaleX(0.7816);transform-origin:0 0;color:#1a1a1a;">Break</div>
<svg style="left:878px;top:168px" width="5" height="9"><path d="M0.5 0.5L4.5 4.5L0.5 8.5Z" fill="#1a1a1a"/></svg>
<div class="t" style="left:756px;top:190.8px;font-size:12px;transform:scaleX(0.855);transform-origin:0 0;color:#1a1a1a;">Arrange</div>
<svg style="left:878px;top:194px" width="5" height="9"><path d="M0.5 0.5L4.5 4.5L0.5 8.5Z" fill="#1a1a1a"/></svg>
<div class="t" style="left:756px;top:210px;font-size:12px;transform:scaleX(0.8575);transform-origin:0 0;color:#1a1a1a;">Transform</div>
<svg style="left:878px;top:213px" width="5" height="9"><path d="M0.5 0.5L4.5 4.5L0.5 8.5Z" fill="#1a1a1a"/></svg>
<div class="t" style="left:756px;top:229.5px;font-size:12px;transform:scaleX(0.8807);transform-origin:0 0;color:#1a1a1a;">Align</div>
<svg style="left:878px;top:232px" width="5" height="9"><path d="M0.5 0.5L4.5 4.5L0.5 8.5Z" fill="#1a1a1a"/></svg>
<div class="t" style="left:756px;top:254.5px;font-size:12px;transform:scaleX(0.8797);transform-origin:0 0;color:#1a1a1a;">Static Text</div>
<div class="t" style="left:756px;top:273.8px;font-size:12px;transform:scaleX(0.8914);transform-origin:0 0;color:#1a1a1a;">Dynamic Text</div>
<div class="t" style="left:756px;top:292.5px;font-size:12px;transform:scaleX(0.8956);transform-origin:0 0;color:#1a1a1a;">Input Text</div>
<div class="t" style="left:756px;top:317.8px;font-size:12px;transform:scaleX(0.8973);transform-origin:0 0;color:#1a1a1a;">Auto-size Height</div>
<div class="t" style="left:756px;top:343.5px;font-size:12px;transform:scaleX(0.8843);transform-origin:0 0;color:#1a1a1a;">Object Attributes...</div>
<div style="left:754px;top:95px;width:136px;height:1px;background:#d7d7d7;"></div>
<div style="left:754px;top:96px;width:136px;height:1px;background:#fdfdfd;"></div>
<div style="left:754px;top:121px;width:136px;height:1px;background:#d7d7d7;"></div>
<div style="left:754px;top:122px;width:136px;height:1px;background:#fdfdfd;"></div>
<div style="left:754px;top:184px;width:136px;height:1px;background:#d7d7d7;"></div>
<div style="left:754px;top:185px;width:136px;height:1px;background:#fdfdfd;"></div>
<div style="left:754px;top:248px;width:136px;height:1px;background:#d7d7d7;"></div>
<div style="left:754px;top:249px;width:136px;height:1px;background:#fdfdfd;"></div>
<div style="left:754px;top:312px;width:136px;height:1px;background:#d7d7d7;"></div>
<div style="left:754px;top:313px;width:136px;height:1px;background:#fdfdfd;"></div>
<div style="left:754px;top:337px;width:136px;height:1px;background:#d7d7d7;"></div>
<div style="left:754px;top:338px;width:136px;height:1px;background:#fdfdfd;"></div>
<div style="left:737px;top:278px;width:4.6px;height:4.6px;border-radius:3px;background:#111;"></div>
<div style="left:887px;top:122px;width:140px;height:81px;background:#f0f0f0;border:1px solid #a0a0a0;box-shadow:2px 2px 1.5px rgba(0,0,10,0.5);"></div>
<div style="left:913px;top:124px;width:1px;height:77px;background:#e2e3e3;"></div>
<div style="left:914px;top:124px;width:1px;height:77px;background:#fdfdfd;"></div>
<div style="left:890px;top:163px;width:140px;height:19px;background:#d1e2f5;border:1px solid #a5cbf1;"></div>
<div class="t" style="left:917.8px;top:127.3px;font-size:12px;transform:scaleX(0.8647);transform-origin:0 0;color:#1a1a1a;">Group as Group</div>
<div class="t" style="left:917.8px;top:146.3px;font-size:12px;transform:scaleX(0.8812);transform-origin:0 0;color:#1a1a1a;">Group as Button</div>
<div class="t" style="left:917.8px;top:165.3px;font-size:12px;transform:scaleX(0.8877);transform-origin:0 0;color:#1a1a1a;">Group as Movie Clip</div>
<div class="t" style="left:917.8px;top:184.3px;font-size:12px;transform:scaleX(0.8514);transform-origin:0 0;color:#1a1a1a;">Group as Shape</div>
</body></html>
